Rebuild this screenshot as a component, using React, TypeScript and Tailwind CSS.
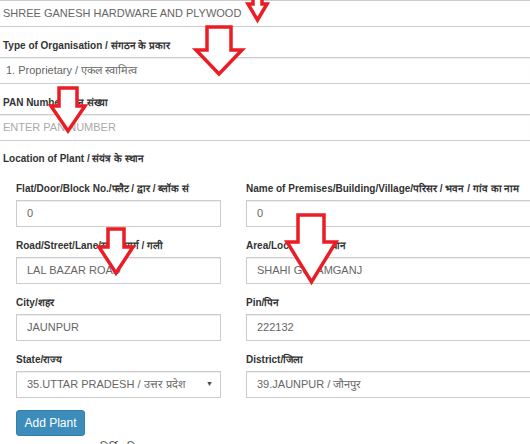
import React from 'react';

const font = "font-['Liberation_Sans',Arial,sans-serif]";

function Field({ label, value, select }: { label: string; value: string; select?: boolean }) {
  return (
    <div className="mb-[6px]">
      <div className="h-6 flex items-center text-[10px] font-bold text-[#333] whitespace-nowrap">{label}</div>
      <div className="h-[27px] border border-[#ccc] shadow-[inset_0_1px_1px_rgba(0,0,0,0.075)] flex items-center pl-[10px] pr-[7px] text-[11px] text-[#666] whitespace-nowrap">
        <span className="flex-1">{value}</span>
        {select && <span className="text-[7px] text-[#444]">▼</span>}
      </div>
    </div>
  );
}

// red outline arrows drawn over the form
const arrows = [
  { sl: 253, sr: 262, top: -6, head: 4, hl: 248, hr: 267, tip: 20 },
  { sl: 207, sr: 231, top: 27, head: 50, hl: 196, hr: 242, tip: 74 },
  { sl: 59, sr: 77, top: 88, head: 106, hl: 51, hr: 85, tip: 131 },
  { sl: 108, sr: 124, top: 229, head: 247, hl: 99, hr: 133, tip: 273 },
  { sl: 298, sr: 324, top: 215, head: 242, hl: 287, hr: 336, tip: 282 },
];

function Arrows() {
  return (
    <svg className="absolute inset-0 pointer-events-none" width={530} height={444}>
      {arrows.map((a, i) => {
        const mid = (a.hl + a.hr) / 2;
        const pts = `${a.sl},${a.top} ${a.sr},${a.top} ${a.sr},${a.head} ${a.hr},${a.head} ${mid},${a.tip} ${a.hl},${a.head} ${a.sl},${a.head}`;
        return <polygon key={i} points={pts} fill="white" stroke="#ec1c24" strokeWidth={3.5} strokeLinejoin="miter" />;
      })}
    </svg>
  );
}

export default function App() {
  return (
    <div className={`relative w-[530px] h-[444px] overflow-hidden bg-white ${font}`}>
      {/* firm name */}
      <div className="h-[27px] border-y border-[#ccc] flex items-center pl-[3px] text-[11px] text-[#666] whitespace-nowrap">
        SHREE GANESH HARDWARE AND PLYWOOD
      </div>
      <div className="h-[30px] pt-[6px] flex items-center pl-[3px] text-[10px] font-bold text-[#333]">
        Type of Organisation / संगठन के प्रकार
      </div>
      <div className="h-[27px] border-y border-[#ccc] shadow-[inset_0_1px_1px_rgba(0,0,0,0.075)] flex items-center pl-[6px] text-[11px] text-[#666]">
        1. Proprietary / एकल स्वामित्व
      </div>
      <div className="h-[30px] pt-[6px] flex items-center pl-[3px] text-[10px] font-bold text-[#333]">
        PAN Number / पैन संख्या
      </div>
      <div className="h-[27px] border-y border-[#ccc] shadow-[inset_0_1px_1px_rgba(0,0,0,0.075)] flex items-center pl-[3px] text-[11px] text-[#aaa]">
        ENTER PAN NUMBER
      </div>

      <div className="h-[35px] flex items-center pl-[3px] text-[10px] font-bold text-[#333]">
        Location of Plant / संयंत्र के स्थान
      </div>

      <div className="grid grid-cols-[205px_320px] gap-x-[25px] pl-4">
        <Field label="Flat/Door/Block No./फ्लैट / द्वार / ब्लॉक सं" value="0" />
        <Field label="Name of Premises/Building/Village/परिसर / भवन / गांव का नाम" value="0" />
        <Field label="Road/Street/Lane/सड़क मार्ग / गली" value="LAL BAZAR ROAD" />
        <Field label="Area/Locality/क्षेत्र/स्थान" value="SHAHI GULAMGANJ" />
        <Field label="City/शहर" value="JAUNPUR" />
        <Field label="Pin/पिन" value="222132" />
        <Field label="State/राज्य" value="35.UTTAR PRADESH / उत्तर प्रदेश" select />
        <Field label="District/जिला" value="39.JAUNPUR / जौनपुर" />
      </div>

      <div className="pl-4 mt-[6px]">
        <button className="h-[26px] w-[69px] rounded-[3px] bg-[#3c8dbc] border border-[#367fa9] text-white text-[12px]">
          Add Plant
        </button>
      </div>
      <div className="pl-[100px] text-[11px] text-[#333] leading-none mt-[6px]">निर्दिष्ट विवरण</div>

      <Arrows />
    </div>
  );
}
